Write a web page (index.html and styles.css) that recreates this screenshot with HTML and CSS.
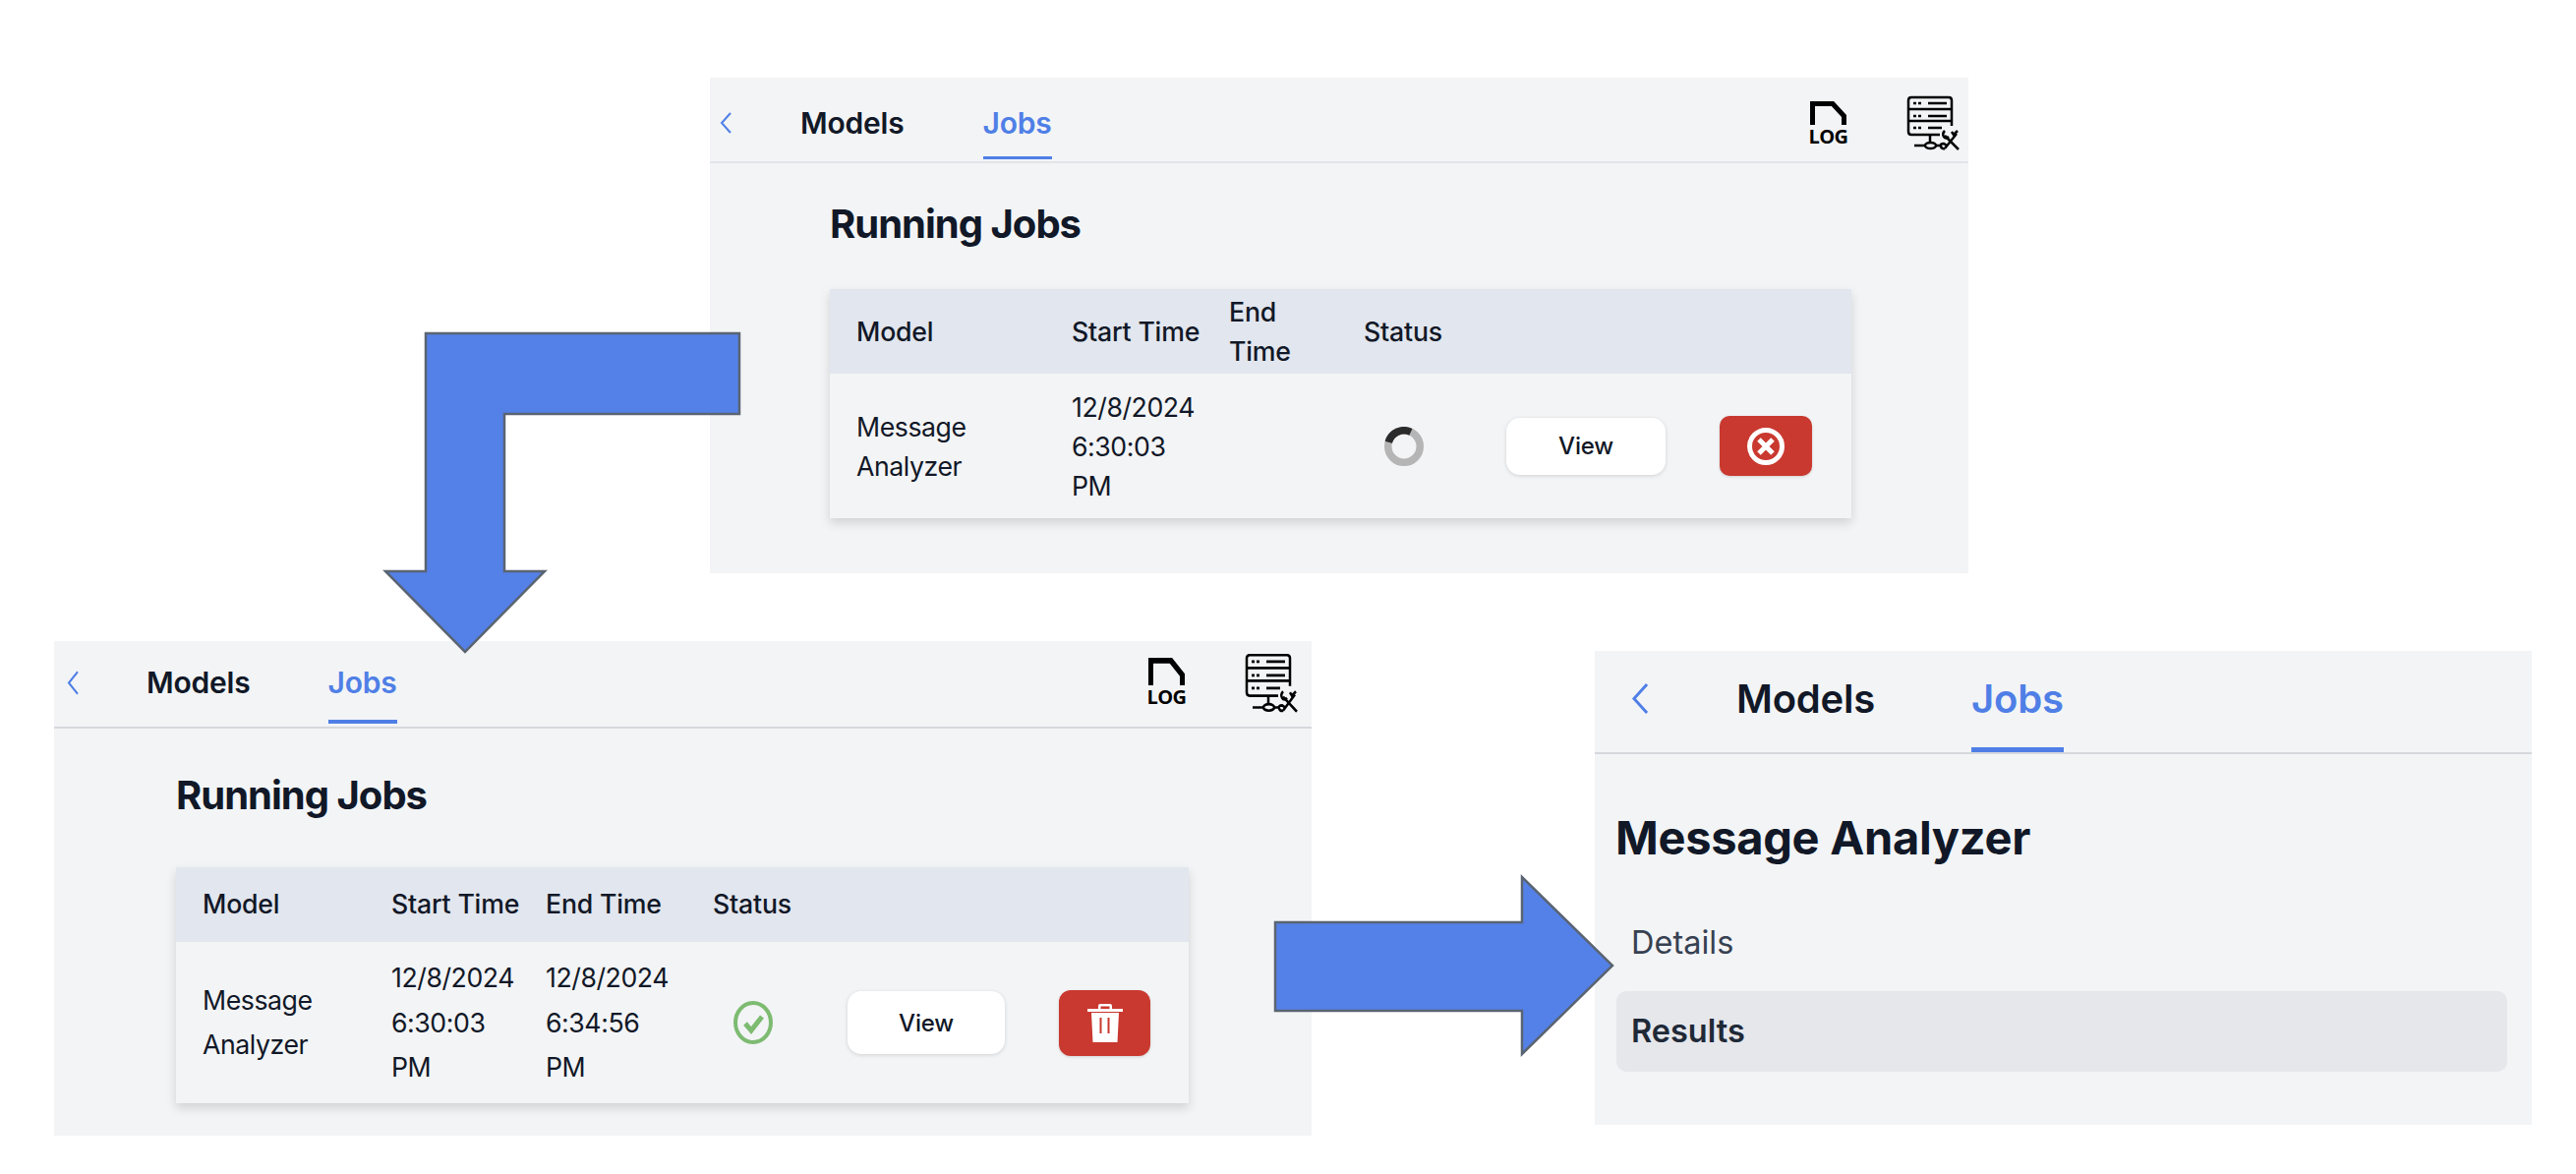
FILE: index.html
```html
<!DOCTYPE html>
<html lang="en">
<head>
  <meta charset="UTF-8">
  <title>Running Jobs</title>
  <link rel="stylesheet" href="styles.css">
</head>
<body>
  <svg class="defs" aria-hidden="true">
    <defs>
      <path id="i-back" d="M11 2 2 12l9 10"/>
      <g id="i-doc">
        <path d="M2.500 24V2.500H23L34.500 15V24"/>
      </g>
      <g id="i-server">
        <path d="M35 41H6q-3 0-3-3V6q0-3 3-3h38q3 0 3 3v26M3 15h44M3 27h44M3 30v-3M23 9h19M23 22h19M23 34h14M25 41v8M9 52h11M31 52h5"/>
        <path class="dots" d="M8 9h3M13 9h3M8 22h3M13 22h3M8 34h3M13 34h3"/>
        <ellipse class="bulb" cx="25.500" cy="52" rx="5.500" ry="3"/>
        <path class="tool" d="M40 42 54 56M52 40 40 55"/>
        <path class="tool" d="M40 37q-3 3-1 6t5 0M47 38l2 3 4-4M40 55q-3 1-4-2t3-3l3 2"/>
      </g>
      <g id="i-cancel">
        <circle cx="19" cy="19" r="16.500"/>
        <path d="M12 12l14 14M26 12 12 26"/>
      </g>
    </defs>
  </svg>

  <section class="panel panel-a">
    <nav class="nav">
      <svg class="back" viewBox="0 0 13 24" preserveAspectRatio="none"><use href="#i-back"/></svg>
      <div class="tabs">
        <a class="tab">Models</a>
        <a class="tab tab-active">Jobs</a>
      </div>
      <div class="tools">
        <div class="log">
          <svg class="log-doc" viewBox="0 0 37 24" preserveAspectRatio="none"><use href="#i-doc"/></svg>
          <span class="log-label">LOG</span>
        </div>
        <svg class="server" viewBox="0 0 58 58" preserveAspectRatio="none"><use href="#i-server"/></svg>
      </div>
    </nav>
    <h1 class="title">Running Jobs</h1>
    <table class="jobs">
      <colgroup>
        <col class="c-model"><col class="c-start"><col class="c-end"><col class="c-status"><col class="c-view"><col class="c-action">
      </colgroup>
      <thead>
        <tr><th>Model</th><th>Start Time</th><th>End<br>Time</th><th>Status</th><th></th><th></th></tr>
      </thead>
      <tbody>
        <tr>
          <td>Message<br>Analyzer</td>
          <td>12/8/2024<br>6:30:03<br>PM</td>
          <td></td>
          <td>
            <div class="status">
              <svg class="spinner" viewBox="0 0 40 40">
                <circle class="spinner-track" cx="20" cy="20" r="16.250"/>
                <path class="spinner-arc" d="M4.300 15.800A16.250 16.250 0 0 1 26.900 5.300"/>
              </svg>
            </div>
          </td>
          <td><button class="btn-view">View</button></td>
          <td>
            <button class="btn-danger">
              <svg class="cancel" viewBox="0 0 38 38"><use href="#i-cancel"/></svg>
            </button>
          </td>
        </tr>
      </tbody>
    </table>
  </section>

  <section class="panel panel-b">
    <nav class="nav">
      <svg class="back" viewBox="0 0 13 24" preserveAspectRatio="none"><use href="#i-back"/></svg>
      <div class="tabs">
        <a class="tab">Models</a>
        <a class="tab tab-active">Jobs</a>
      </div>
      <div class="tools">
        <div class="log">
          <svg class="log-doc" viewBox="0 0 37 24" preserveAspectRatio="none"><use href="#i-doc"/></svg>
          <span class="log-label">LOG</span>
        </div>
        <svg class="server" viewBox="0 0 58 58" preserveAspectRatio="none"><use href="#i-server"/></svg>
      </div>
    </nav>
    <h1 class="title">Running Jobs</h1>
    <table class="jobs">
      <colgroup>
        <col class="c-model"><col class="c-start"><col class="c-end"><col class="c-status"><col class="c-view"><col class="c-action">
      </colgroup>
      <thead>
        <tr><th>Model</th><th>Start Time</th><th>End Time</th><th>Status</th><th></th><th></th></tr>
      </thead>
      <tbody>
        <tr>
          <td>Message<br>Analyzer</td>
          <td>12/8/2024<br>6:30:03<br>PM</td>
          <td>12/8/2024<br>6:34:56<br>PM</td>
          <td>
            <div class="status">
              <svg class="done" viewBox="0 0 40 44" preserveAspectRatio="none">
                <ellipse cx="20" cy="22" rx="18" ry="20"/>
                <path d="M12 23l6 7 11-14"/>
              </svg>
            </div>
          </td>
          <td><button class="btn-view">View</button></td>
          <td>
            <button class="btn-danger">
              <svg class="trash" viewBox="0 0 36 39">
                <path class="trash-fill" d="M11 5V2q0-2 2-2h10q2 0 2 2v3h11v3H0V5zm2.500 0h9V2.500h-9zM4 9h28l-1.500 30h-25z"/>
                <path class="trash-bars" d="M13.500 14v16M21.500 14v16"/>
              </svg>
            </button>
          </td>
        </tr>
      </tbody>
    </table>
  </section>

  <section class="panel panel-c">
    <nav class="nav">
      <svg class="back" viewBox="0 0 13 24" preserveAspectRatio="none"><use href="#i-back"/></svg>
      <div class="tabs">
        <a class="tab">Models</a>
        <a class="tab tab-active">Jobs</a>
      </div>
    </nav>
    <h1 class="title">Message Analyzer</h1>
    <ul class="menu">
      <li class="menu-item">Details</li>
      <li class="menu-item menu-item-active">Results</li>
    </ul>
  </section>

  <svg class="arrow arrow-down" viewBox="0 0 366 328">
    <path d="M363 2H44V244H3L84 326 165 244H124V84H363Z"/>
  </svg>
  <svg class="arrow arrow-right" viewBox="0 0 346 184">
    <path d="M2 48H253V2L345 92 253 182V138H2Z"/>
  </svg>
</body>
</html>
```

FILE: styles.css
```css
* {
  box-sizing: border-box;
}

body {
  margin: 0;
  width: 2620px;
  height: 1194px;
  position: relative;
  overflow: hidden;
  background: #fff;
  font-family: Inter, "Liberation Sans", sans-serif;
  color: #111827;
}

.defs {
  position: absolute;
  width: 0;
  height: 0;
}

/* the three screens sit on a free canvas */
.panel {
  position: absolute;
  background: #f3f4f6;
}

.panel-a {
  left: 722px;
  top: 79px;
  width: 1280px;
  height: 504px;
}

.panel-b {
  left: 55px;
  top: 652px;
  width: 1279px;
  height: 503px;
}

.panel-c {
  left: 1622px;
  top: 662px;
  width: 953px;
  height: 482px;
}

/* top nav */
.nav {
  display: flex;
  align-items: flex-start;
  border-bottom: 2px solid #e2e4e9;
}

.panel-a .nav {
  height: 87px;
  padding: 17px 6px 0 10px;
}

.panel-b .nav {
  height: 89px;
  padding: 11px 11px 0 13px;
  border-bottom-color: #d5d8dd;
}

.panel-c .nav {
  height: 105px;
  padding: 22px 0 0 37px;
  border-bottom-color: #d5d8dd;
}

.back {
  width: 13px;
  height: 24px;
  fill: none;
  stroke: #4f7fe6;
  stroke-width: 2;
  flex: none;
}

.panel-a .back {
  margin-top: 17px;
}

.panel-b .back {
  width: 13px;
  height: 27px;
  margin-top: 18px;
}

.panel-c .back {
  width: 19px;
  height: 35px;
  margin-top: 9px;
}

.tabs {
  display: flex;
  margin-left: 69px;
  gap: 80px;
}

.panel-a .tabs {
  margin-top: 9px;
}

.panel-b .tabs {
  margin-top: 11px;
  margin-left: 68px;
  gap: 79px;
}

.panel-c .tabs {
  margin-left: 88px;
  gap: 98px;
}

.tab {
  font-size: 30px;
  font-weight: 600;
  line-height: 40px;
  letter-spacing: -0.2px;
  padding-bottom: 14px;
  border-bottom: 3px solid transparent;
}

.panel-b .tab {
  padding-bottom: 18px;
  border-bottom-width: 4px;
}

.panel-c .tab {
  font-size: 40px;
  line-height: 54px;
  padding-bottom: 22px;
  border-bottom-width: 5px;
}

.tab-active {
  color: #4f7fe6;
  border-bottom-color: #4f7fe6;
}

/* log + server icons */
.tools {
  display: flex;
  align-items: flex-start;
  gap: 60px;
  margin-left: auto;
}

.log {
  display: flex;
  flex-direction: column;
  align-items: center;
  width: 37px;
  margin-top: 7px;
}

.panel-b .log {
  margin-top: 6px;
}

.log-doc {
  width: 37px;
  height: 24px;
  fill: none;
  stroke: #000;
  stroke-width: 5;
}

.panel-b .log-doc {
  height: 28px;
}

.log-label {
  font-family: "Open Sans", sans-serif;
  font-size: 20px;
  font-weight: 700;
  line-height: 24px;
  letter-spacing: -0.5px;
  color: #000;
}

.server {
  width: 58px;
  height: 58px;
  fill: none;
  stroke: #000;
  stroke-width: 2.500;
}

.panel-b .server {
  height: 63px;
}

.server .dots {
  stroke-width: 2;
}

.server .bulb {
  stroke-width: 2;
}

.server .tool {
  stroke-width: 2.200;
}

/* page heading */
.title {
  margin: 38px 0 42px 122px;
  font-size: 40px;
  font-weight: 700;
  line-height: 48px;
  letter-spacing: -1px;
}

.panel-b .title {
  margin: 44px 0 49px 124px;
}

.panel-c .title {
  margin: 56px 0 0 21px;
  font-size: 47px;
  line-height: 58px;
  letter-spacing: -0.3px;
}

/* jobs table */
.jobs {
  border-collapse: collapse;
  table-layout: fixed;
  font-size: 26.700px;
  line-height: 40px;
  background: #f3f4f6;
  box-shadow: 0 5px 10px rgba(0, 0, 0, 0.14);
}

.panel-a .jobs {
  width: 1039px;
  margin-left: 122px;
}

.panel-b .jobs {
  width: 1030px;
  margin-left: 124px;
  line-height: 45.500px;
}

.jobs th {
  padding: 3px 10px 2.500px 27px;
  background: #e2e6ee;
  font-weight: 500;
  letter-spacing: -0.2px;
  text-align: left;
  white-space: nowrap;
}

.panel-b .jobs th {
  padding-top: 15px;
  padding-bottom: 15px;
}

.jobs td {
  padding: 14px 10px 13.500px 27px;
  letter-spacing: -0.45px;
  white-space: nowrap;
}

.panel-b .jobs td {
  padding-top: 14.500px;
  padding-bottom: 13.500px;
}

.panel-a .c-model { width: 219px; }
.panel-a .c-start { width: 160px; }
.panel-a .c-end { width: 137px; }
.panel-a .c-status { width: 145px; }
.panel-a .c-view { width: 217px; }
.panel-a .c-action { width: 161px; }

.panel-b .c-model { width: 192px; }
.panel-b .c-start { width: 157px; }
.panel-b .c-end { width: 170px; }
.panel-b .c-status { width: 137px; }
.panel-b .c-view { width: 215px; }
.panel-b .c-action { width: 159px; }

.status {
  display: flex;
  justify-content: center;
  width: 82px;
}

.spinner {
  width: 40px;
  height: 40px;
  fill: none;
  stroke-width: 7.500;
}

.spinner-track {
  stroke: #b5b5b5;
}

.spinner-arc {
  stroke: #2b2b2b;
}

.done {
  width: 40px;
  height: 44px;
  fill: none;
  stroke: #7dbb71;
  stroke-width: 4;
}

.done path {
  stroke-width: 5;
}

.btn-view {
  display: block;
  width: 162px;
  height: 58px;
  padding: 0;
  border: none;
  border-radius: 14px;
  background: #fff;
  color: #111827;
  font: 500 24px Inter, sans-serif;
  letter-spacing: -0.2px;
  box-shadow: 0 1px 4px rgba(0, 0, 0, 0.14);
}

.panel-b .btn-view {
  width: 160px;
  height: 64px;
}

.btn-danger {
  display: flex;
  align-items: center;
  justify-content: center;
  width: 94px;
  height: 61px;
  padding: 0;
  border: none;
  border-radius: 10px;
  background: #c9392f;
  box-shadow: 0 1px 3px rgba(0, 0, 0, 0.14);
}

.panel-b .btn-danger {
  width: 93px;
  height: 67px;
  border-radius: 12px;
}

.cancel {
  width: 38px;
  height: 38px;
  fill: none;
  stroke: #fff;
  stroke-width: 5;
}

.trash {
  width: 36px;
  height: 39px;
}

.trash-fill {
  fill: #fff;
}

.trash-bars {
  fill: none;
  stroke: #c9392f;
  stroke-width: 2;
}

/* detail menu */
.menu {
  list-style: none;
  margin: 37px 0 0 22px;
  padding: 0;
  width: 906px;
}

.menu-item {
  height: 82px;
  padding-left: 15px;
  font-size: 32.500px;
  line-height: 82px;
  color: #374151;
  border-radius: 10px;
}

.menu-item + .menu-item {
  margin-top: 8px;
}

.menu-item-active {
  background: #e5e7eb;
  color: #1f2937;
  font-weight: 600;
}

/* flow arrows between the screens */
.arrow {
  position: absolute;
  fill: #5481e8;
  stroke: #5a6472;
  stroke-width: 2.500;
  overflow: visible;
}

.arrow-down {
  left: 389px;
  top: 337px;
  width: 366px;
  height: 328px;
}

.arrow-right {
  left: 1295px;
  top: 890px;
  width: 346px;
  height: 184px;
}
```
